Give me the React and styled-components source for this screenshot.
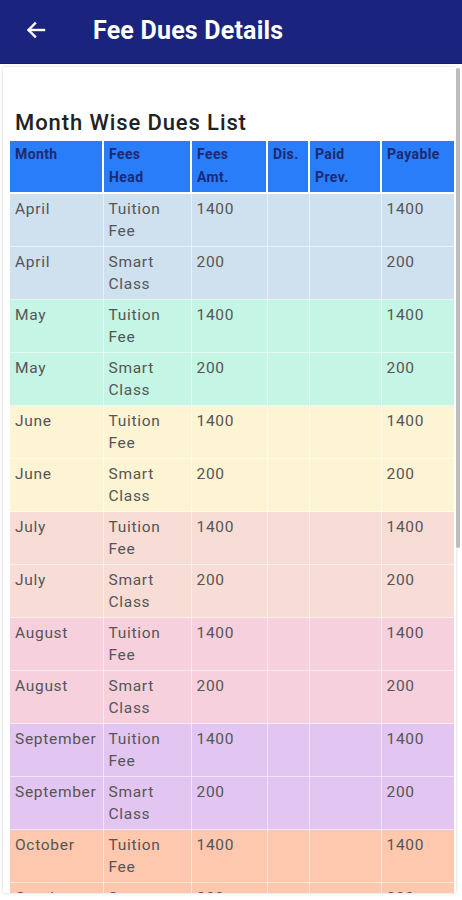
import React from 'react'
import styled, { createGlobalStyle } from 'styled-components'

const GlobalStyle = createGlobalStyle`
  body {
    margin: 0;
    background: #ffffff;
    font-family: Roboto, "Noto Sans", sans-serif;
    overflow: hidden;
  }
`

const rowColors = {
  April: '#cfe0ef',
  May: '#c5f5e4',
  June: '#fdf4d4',
  July: '#f8ddd7',
  August: '#f7d0dd',
  September: '#e2c5f1',
  October: '#fdc8ae',
}

const months = ['April', 'May', 'June', 'July', 'August', 'September', 'October']

const rows = months.flatMap(m => [
  { month: m, head: ['Tuition', 'Fee'], amt: '1400', pay: '1400' },
  { month: m, head: ['Smart', 'Class'], amt: '200', pay: '200' },
])

const columns = [
  { label: ['Month'], width: 93 },
  { label: ['Fees', 'Head'], width: 88 },
  { label: ['Fees', 'Amt.'], width: 76 },
  { label: ['Dis.'], width: 42 },
  { label: ['Paid', 'Prev.'], width: 72 },
  { label: ['Payable'], width: 73 },
]

const BackArrow = () => (
  <svg width="24" height="24" viewBox="0 0 24 24" fill="none" stroke="white" strokeWidth="2.4" strokeLinecap="square">
    <path d="M20 12H5" />
    <path d="M11 5.5L4.5 12L11 18.5" />
  </svg>
)

export default function App() {
  return (
    <Page>
      <GlobalStyle />
      <TopBar>
        <BackButton><BackArrow /></BackButton>
        <Title>Fee Dues Details</Title>
      </TopBar>
      <Main>
        <Card>
          <Heading>Month Wise Dues List</Heading>
          <Table>
            <colgroup>
              {columns.map((c, i) => <col key={i} style={{ width: c.width }} />)}
            </colgroup>
            <thead>
              <tr>
                {columns.map((c, i) => (
                  <Th key={i}>{c.label.map((l, j) => <div key={j}>{l}</div>)}</Th>
                ))}
              </tr>
            </thead>
            <tbody>
              {rows.map((r, i) => (
                <Tr key={i} $bg={rowColors[r.month]}>
                  <Td>{r.month}</Td>
                  <Td>{r.head.map((h, j) => <div key={j}>{h}</div>)}</Td>
                  <Td>{r.amt}</Td>
                  <Td></Td>
                  <Td></Td>
                  <Td>{r.pay}</Td>
                </Tr>
              ))}
            </tbody>
          </Table>
        </Card>
        <ScrollThumb />
      </Main>
    </Page>
  )
}

//-------------STYLES-------------------------------------------

const Page = styled.div`
  width: 462px;
  height: 900px;
  overflow: hidden;
  background: #ffffff;
`

const TopBar = styled.div`
  height: 64px;
  background: #1a237e;
  border-bottom: 1px solid #141b66;
  box-sizing: border-box;
  display: flex;
  align-items: center;
  padding-left: 24px;
`

const BackButton = styled.div`
  width: 24px;
  height: 24px;
  display: flex;
  margin-top: -4px;
`

const Title = styled.h1`
  margin: -3px 0 0 45px;
  color: #ffffff;
  font-size: 25px;
  font-weight: 700;
  letter-spacing: 0.2px;
`

const Main = styled.div`
  position: relative;
  padding: 3px 6px 0 3px;
  height: 830px;
`

const Card = styled.div`
  background: #ffffff;
  box-shadow: 0 0 3px rgba(0, 0, 0, 0.18);
  padding: 41px 0 0 7px;
  height: 826px;
  overflow: hidden;
  box-sizing: border-box;
`

const Heading = styled.h2`
  margin: 0 0 3px 5px;
  font-size: 22px;
  line-height: 30px;
  font-weight: 500;
  color: #222222;
  letter-spacing: 0.9px;
`

const Table = styled.table`
  border-collapse: collapse;
  table-layout: fixed;
  width: 444px;
`

const Th = styled.th`
  background: #2a7df9;
  color: #1b2a74;
  font-size: 14px;
  font-weight: 700;
  line-height: 23px;
  text-align: left;
  vertical-align: top;
  padding: 2px 5px 3px 5px;
  border: 2px solid #ffffff;
  border-top: none;
  height: 46px;
  letter-spacing: 0.4px;
  &:first-child { border-left: none; }
  &:last-child { border-right: none; }
`

const Tr = styled.tr`
  background: ${p => p.$bg};
`

const Td = styled.td`
  color: #555555;
  font-size: 15.5px;
  line-height: 22px;
  letter-spacing: 0.7px;
  vertical-align: top;
  padding: 4px 5px 4px 5px;
  height: 44px;
  border: 1px solid rgba(255, 255, 255, 0.55);
  white-space: nowrap;
  &:first-child { border-left: none; }
  &:last-child { border-right: none; }
`

const ScrollThumb = styled.div`
  position: absolute;
  right: 2px;
  top: 4px;
  width: 4px;
  height: 480px;
  background: #bdbdbd;
  border-radius: 2px;
`
